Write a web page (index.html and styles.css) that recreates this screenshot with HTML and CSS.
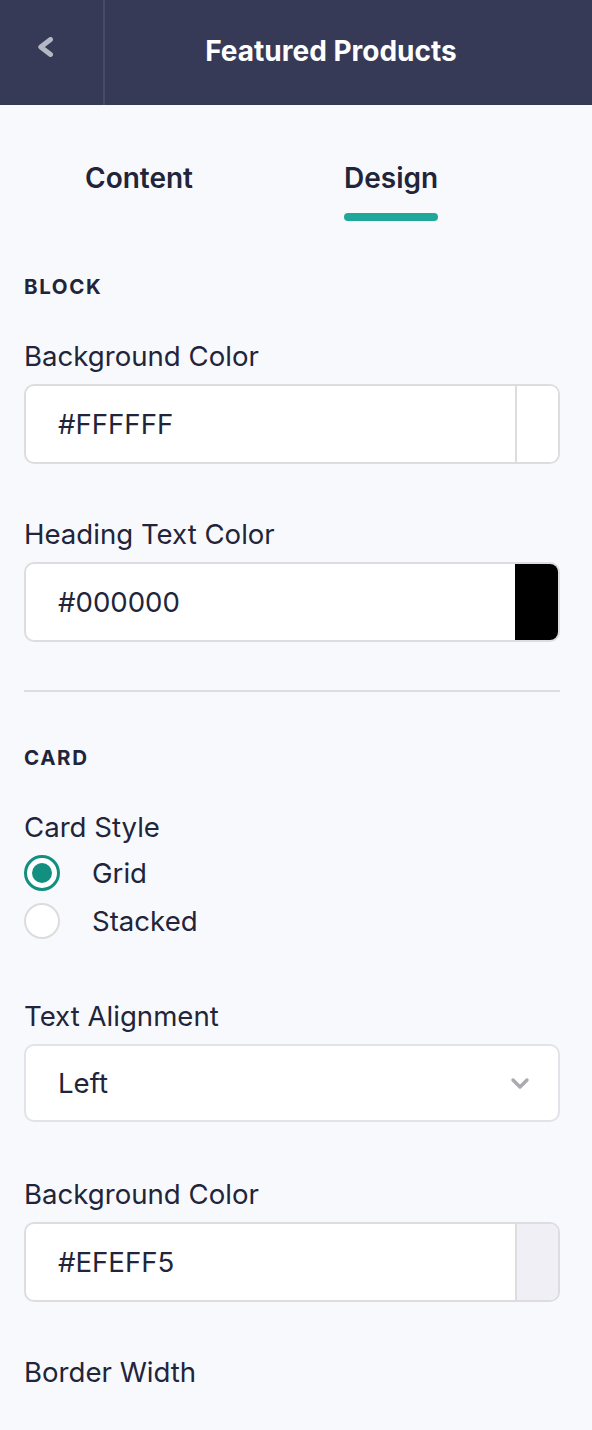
FILE: index.html
```html
<!DOCTYPE html>
<html>
<head>
<meta charset="utf-8">
<link rel="stylesheet" href="styles.css">
</head>
<body>
<header class="topbar">
  <div class="back">
    <svg width="15" height="20" viewBox="0 0 15 20"><polyline points="12.5,2.5 2.8,10 12.5,17.5" fill="none" stroke="#b5b7c4" stroke-width="5" stroke-linecap="round" stroke-linejoin="round"/></svg>
  </div>
  <div class="title">Featured Products</div>
</header>
<nav class="tabs">
  <div class="tab">Content</div>
  <div class="tab active">Design</div>
</nav>
<main class="panel">
  <h3 class="section-title">BLOCK</h3>
  <div class="field">
    <label class="label">Background Color</label>
    <div class="color-input"><span class="value">#FFFFFF</span><span class="swatch swatch-white"></span></div>
  </div>
  <div class="field">
    <label class="label">Heading Text Color</label>
    <div class="color-input"><span class="value">#000000</span><span class="swatch swatch-black"></span></div>
  </div>
  <hr class="divider">
  <h3 class="section-title">CARD</h3>
  <div class="field">
    <label class="label">Card Style</label>
    <div class="radios">
      <div class="radio-row"><span class="radio checked"></span><span class="radio-text">Grid</span></div>
      <div class="radio-row"><span class="radio"></span><span class="radio-text">Stacked</span></div>
    </div>
  </div>
  <div class="field field-select">
    <label class="label">Text Alignment</label>
    <div class="select"><span class="value">Left</span>
      <svg width="20" height="14" viewBox="0 0 20 14"><polyline points="3,4 10,11 17,4" fill="none" stroke="#a9abb0" stroke-width="3.5" stroke-linecap="round" stroke-linejoin="round"/></svg>
    </div>
  </div>
  <div class="field">
    <label class="label">Background Color</label>
    <div class="color-input"><span class="value">#EFEFF5</span><span class="swatch swatch-grey"></span></div>
  </div>
  <div class="field">
    <label class="label">Border Width</label>
  </div>
</main>
</body>
</html>
```
FILE: styles.css
```css
* { box-sizing: border-box; }
html, body { margin: 0; padding: 0; }
body {
  width: 592px;
  min-height: 1430px;
  background: #f8f9fd;
  font-family: Inter, "Noto Sans", sans-serif;
  color: #22253a;
}
.topbar {
  height: 105px;
  background: #363a56;
  display: flex;
  align-items: stretch;
}
.back {
  width: 105px;
  border-right: 2px solid #454a68;
  display: flex;
  align-items: center;
  padding-left: 38px;
  padding-bottom: 11px;
}
.back svg { display: block; }
.title {
  flex: 1;
  padding-right: 35px;
  display: flex;
  align-items: center;
  justify-content: center;
  padding-bottom: 4px;
  color: #ffffff;
  font-size: 28px;
  font-weight: 700;
}
.tabs {
  display: flex;
  padding-left: 85px;
  gap: 151px;
  padding-top: 56px;
}
.tab {
  font-size: 28px;
  font-weight: 600;
  line-height: 34px;
  padding-bottom: 18px;
  color: #22253a;
  position: relative;
}
.tab.active::after {
  content: "";
  display: block;
  height: 8px;
  border-radius: 4px;
  background: #1fa899;
  position: absolute;
  left: 0; right: 0;
  bottom: -8px;
}
.panel {
  padding: 62px 32px 0 24px;
}
.section-title {
  margin: 0;
  font-size: 20.5px;
  font-weight: 700;
  letter-spacing: 1.6px;
  line-height: 24px;
  color: #22253a;
}
.section-title + .field { margin-top: 39px; }
.field { margin-bottom: 52px; }
.label {
  display: block;
  font-size: 27.6px;
  line-height: 36px;
  margin-bottom: 10px;
}
.color-input, .select {
  height: 80px;
  background: #ffffff;
  border: 2px solid #dddde0;
  border-radius: 10px;
  display: flex;
  align-items: center;
  overflow: hidden;
}
.value {
  flex: 1;
  padding-left: 32px;
  font-size: 27.6px;
  color: #22253a;
}
.swatch {
  width: 43px;
  align-self: stretch;
  border-left: 2px solid #dddde0;
}
.swatch-white { background: #ffffff; }
.swatch-black { background: #000000; border-left-color: #000; }
.swatch-grey { background: #efeff5; }
.divider {
  border: 0;
  height: 2px;
  background: #dcdce2;
  margin: -4px 0 54px 0;
}
.radios { display: flex; flex-direction: column; gap: 12px; margin-top: 3px; }
.radio-row { display: flex; align-items: center; height: 36px; }
.radio {
  width: 36px; height: 36px;
  border-radius: 50%;
  border: 2px solid #dcdcdc;
  background: #ffffff;
  margin-right: 32px;
  position: relative;
}
.radio.checked {
  border: 3px solid #138f80;
}
.radio.checked::after {
  content: "";
  position: absolute;
  left: 5px; top: 5px;
  width: 20px; height: 20px;
  border-radius: 50%;
  background: #138f80;
}
.radio-text { font-size: 27.6px; }
.field-select { margin-top: 59px; margin-bottom: 54px; }
.select { height: 78px; padding-right: 28px; border-color: #e2e3e8; }
```
